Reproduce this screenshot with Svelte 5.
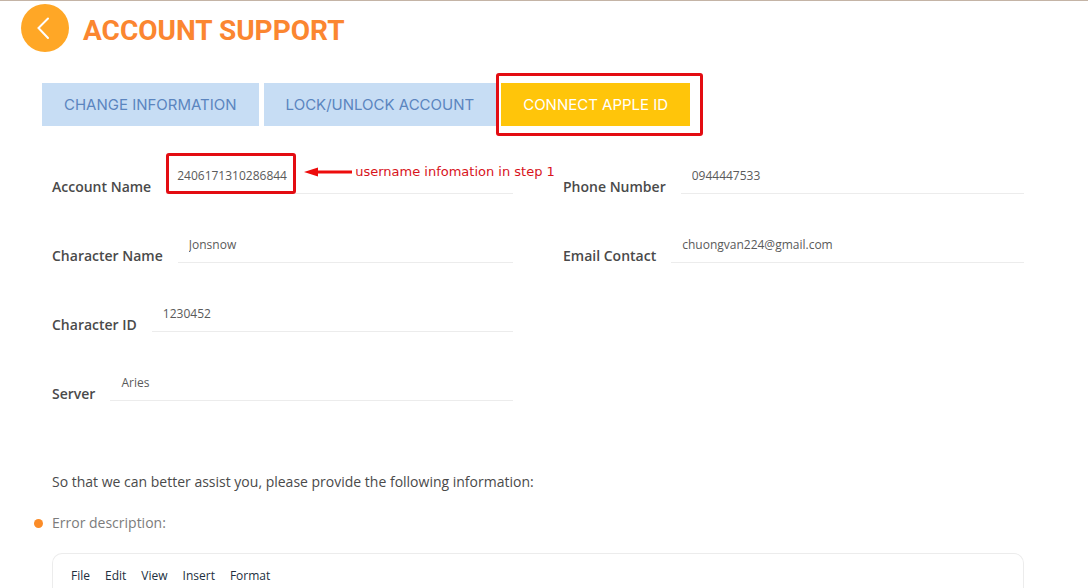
<script>
  const tabs = ['CHANGE INFORMATION', 'LOCK/UNLOCK ACCOUNT', 'CONNECT APPLE ID'];
  let active = $state(2);

  const columns = [
    [
      { id: 'account', label: 'Account Name', value: '2406171310286844', note: 'username infomation in step 1' },
      { id: 'character', label: 'Character Name', value: 'Jonsnow' },
      { id: 'character-id', label: 'Character ID', value: '1230452' },
      { id: 'server', label: 'Server', value: 'Aries' }
    ],
    [
      { id: 'phone', label: 'Phone Number', value: '0944447533' },
      { id: 'email', label: 'Email Contact', value: 'chuongvan224@gmail.com' }
    ]
  ];

  const menu = ['File', 'Edit', 'View', 'Insert', 'Format'];
</script>

<div class="page">
  <header>
    <button class="back" aria-label="Back">
      <svg width="48" height="48" viewBox="0 0 48 48" aria-hidden="true">
        <path d="M27 14.5 17.5 24 27 34" fill="none" stroke="#fff" stroke-width="2" stroke-linecap="round" />
      </svg>
    </button>
    <h1>ACCOUNT SUPPORT</h1>
  </header>

  <nav>
    {#each tabs as tab, i}
      <div class="tab" class:marked={i === 2}>
        <button class:active={active === i} onclick={() => (active = i)}>{tab}</button>
      </div>
    {/each}
  </nav>

  <form>
    <div class="columns">
      {#each columns as column}
        <div class="column">
          {#each column as field}
            <div class="field">
              <label for={field.id}>{field.label}</label>
              <div class="control" class:marked={field.note}>
                <input id={field.id} type="text" value={field.value} />
                {#if field.note}
                  <div class="note">
                    <svg width="48" height="10" viewBox="0 0 48 10" aria-hidden="true">
                      <path d="M0 5 14 .5V3.500H48v3H14v3Z" fill="#ed0c0c" />
                    </svg>
                    <span>{field.note}</span>
                  </div>
                {/if}
              </div>
            </div>
          {/each}
        </div>
      {/each}
    </div>

    <p class="intro">So that we can better assist you, please provide the following information:</p>
    <p class="prompt">Error description:</p>

    <div class="editor">
      {#each menu as item}
        <button type="button">{item}</button>
      {/each}
    </div>
  </form>
</div>

<style>
  :global(body) {
    margin: 0;
    background: #fff;
  }

  .page {
    box-sizing: border-box;
    min-height: 100vh;
    display: flex;
    flex-direction: column;
    border-top: 1px solid #c4b4a6;
    font-family: 'Open Sans', sans-serif;
    color: #4a4a4a;
  }

  button,
  input {
    border: 0;
    padding: 0;
    background: none;
    font: inherit;
    color: inherit;
  }

  button {
    cursor: pointer;
  }

  header {
    display: flex;
    align-items: center;
    gap: 14px;
    padding: 3px 21px 0;
  }

  .back {
    height: 48px;
    border-radius: 50%;
    background: #ffa726;
  }

  h1 {
    margin: 6px 0 0;
    font: bold 28px/40px Roboto, sans-serif;
    color: #fb8630;
  }

  nav {
    display: flex;
    gap: 5px;
    padding: 31px 42px 0;
  }

  .tab {
    position: relative;
  }

  .tab button {
    height: 43px;
    padding: 0 22px;
    font: 15px/43px Inter, sans-serif;
    white-space: nowrap;
    color: #5b85bf;
    background: #c7ddf4;
  }

  .tab .active {
    color: #fff;
    background: #ffc50a;
  }

  .tab.marked::after,
  .control.marked::after {
    content: '';
    position: absolute;
    border: 3px solid #e30c12;
    border-radius: 3px;
    pointer-events: none;
  }

  .tab.marked::after {
    inset: -10px -13px -10px -5px;
  }

  form {
    flex: 1;
    display: flex;
    flex-direction: column;
    padding: 30px 64px 0 52px;
  }

  .columns {
    display: grid;
    grid-template-columns: 1fr 1fr;
    gap: 50px;
  }

  .field {
    display: flex;
    align-items: flex-end;
    gap: 15px;
    margin-bottom: 31px;
  }

  label {
    font-weight: 600;
    font-size: 14px;
    line-height: 14px;
    white-space: nowrap;
  }

  .control {
    position: relative;
    flex: 1;
    min-width: 0;
    display: flex;
  }

  input {
    width: 100%;
    height: 38px;
    box-sizing: border-box;
    padding: 2px 11px 0;
    border-bottom: 1px solid #ececec;
    font-size: 12px;
    color: #5a5a5a;
  }

  .control.marked::after {
    width: 124px;
    height: 35px;
    left: 0;
    top: -3px;
  }

  .note {
    position: absolute;
    left: 138px;
    top: 7px;
    display: flex;
    align-items: center;
    gap: 3px;
    font: 13px/18px 'DejaVu Sans', sans-serif;
    white-space: nowrap;
    color: #d8141c;
  }

  p {
    margin: 0;
    font-size: 14px;
    line-height: 20px;
  }

  .intro {
    margin-top: 40px;
  }

  .prompt {
    display: flex;
    align-items: center;
    gap: 9px;
    margin: 21px 0 0 -18px;
    color: #7c7c7c;
  }

  .prompt::before {
    content: '';
    width: 9px;
    height: 9px;
    border-radius: 50%;
    background: #fb8c28;
  }

  .editor {
    flex: 1;
    display: flex;
    align-items: flex-start;
    gap: 15px;
    margin-top: 20px;
    padding: 12px 18px 0;
    border: 1px solid #ececec;
    border-bottom: 0;
    border-radius: 10px 10px 0 0;
    font-size: 12px;
    line-height: 20px;
    color: #222f3e;
  }
</style>
